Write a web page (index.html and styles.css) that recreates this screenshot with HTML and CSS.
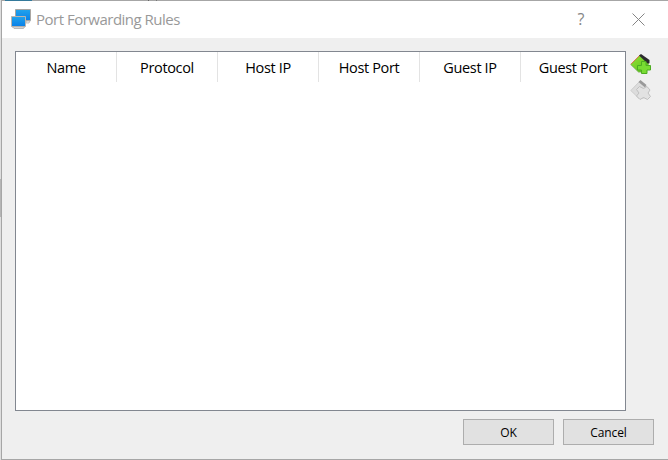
FILE: index.html
```html
<!DOCTYPE html>
<html lang="en">
<head>
<meta charset="utf-8">
<title>Port Forwarding Rules</title>
<link rel="stylesheet" href="styles.css">
</head>
<body>
<div class="desktop">
<main class="window">
  <header class="titlebar">
    <svg class="app-icon" width="21" height="22" viewBox="0 0 21 22">
      <defs><linearGradient id="screen" x1="0" y1="0" x2="0" y2="1"><stop offset="0" stop-color="#22a4eb"/><stop offset="1" stop-color="#087fe8"/></linearGradient></defs>
      <path d="M4.500 1.500h15v11h-15z" fill="url(#screen)" stroke="#aaa6a2"/>
      <path d="M15 13h4l-1 2h-3z" fill="#eee" stroke="#aaa" stroke-width=".7"/>
      <path d="M.5 8.500h14v10H.5z" fill="url(#screen)" stroke="#bbb5ae"/>
      <path d="M1.500 19h12l-1 1.500H3z" fill="#eee" stroke="#aaa" stroke-width=".8"/>
    </svg>
    <h1 class="title">Port Forwarding Rules</h1>
    <button class="control help" aria-label="Help">?</button>
    <button class="control close" aria-label="Close"><svg width="13" height="13" viewBox="0 0 13 13"><path d="M.5.5l12 12M12.500.5l-12 12" stroke="#858585" stroke-width="1" fill="none"/></svg></button>
  </header>
  <section class="content">
    <div class="rules">
      <div class="columns">
        <div class="column"><span>Name</span></div>
        <div class="column"><span>Protocol</span></div>
        <div class="column"><span>Host IP</span></div>
        <div class="column"><span>Host Port</span></div>
        <div class="column"><span>Guest IP</span></div>
        <div class="column"><span>Guest Port</span></div>
      </div>
    </div>
    <div class="tools">
      <svg width="22" height="22" viewBox="0 0 22 22">
        <defs><linearGradient id="green" x1="0" y1="0" x2="1" y2="1"><stop offset="0" stop-color="#96dc3c"/><stop offset="1" stop-color="#58c814"/></linearGradient></defs>
        <path d="M.8 11.500L10 2l9 8-5 9H8.500z" fill="url(#green)" stroke="#6aa545" stroke-width=".8"/>
        <path d="M1 11L10 2" stroke="#dd7a50" stroke-width="1"/>
        <path d="M9 2.500L11 1l8.500 6v3l-2 .5z" fill="#2b2a2e"/>
        <path d="M11.500 8.500H16v4h4.500V17H17v3.500h-5.500V17h-4v-4.500h4z" fill="#78dc32" stroke="#4dac22"/>
      </svg>
      <svg width="22" height="22" viewBox="0 0 22 22">
        <path d="M.8 11.500L10 2l8 7-4 10H8.500z" fill="#dcdcdc" stroke="#c6c6c6" stroke-width=".8"/>
        <path d="M8.500 3L10.500 1l6 5-1.500 2.500z" fill="#999"/>
        <path d="M9.500 7.500l4 2 3.500-2 3 3.500-2 3 2.500 3.500-3 3-4-2-3.500 2-3.500-3.500 2.500-3-2.500-3.500z" fill="#e2e2e2" stroke="#c0c0c0"/>
      </svg>
    </div>
  </section>
  <footer class="actions"><button>OK</button><button>Cancel</button></footer>
</main>
</div>
</body>
</html>
```
FILE: styles.css
```css
* { box-sizing: border-box; }
body { margin: 0; overflow: hidden; background: #ddd; font-family: "Open Sans", "Noto Sans", sans-serif; }
button { font: inherit; padding: 0; border: 0; background: transparent; }
svg { display: block; flex-shrink: 0; }
.desktop { width: 668px; height: 460px; padding-left: 1px; background: linear-gradient(#dedede 0 179px, #b5b5b5 179px 217px, #dedede 217px); }
.window { width: 667px; height: 460px; display: flex; flex-direction: column; border: 0 solid #a6a6a6; border-width: 0 0 1px 1px; padding-top: 1px; background: linear-gradient(90deg, #a6a6a6 0 3px, #34799a 3px 30px, #a6a6a6 30px 146px, #666 146px 147px, #a6a6a6 147px 154px, #777 154px 155px, #a6a6a6 155px) 0 0 / 100% 1px no-repeat #efefef; }
.titlebar { height: 37px; display: flex; align-items: center; background: #fff; color: #999; }
.app-icon { margin: -1px 0 0 9px; }
.title { width: 145px; margin: -1px 0 0 4px; font-size: 15px; line-height: 20px; font-weight: 400; letter-spacing: -.5px; white-space: nowrap; }
.control { display: flex; align-items: center; justify-content: center; height: 36px; }
.help { width: 20px; margin: -2px 0 0 390px; font-size: 16px; color: #858585; }
.close { width: 20px; margin-left: 37px; }
.content { height: 373px; display: flex; padding-top: 13px; padding-left: 13px; }
.rules { width: 611px; height: 360px; background: #fff; border: 1px solid #828790; }
.columns { height: 30px; display: grid; grid-template-columns: repeat(6, 101px); }
.column { display: flex; align-items: center; justify-content: center; padding-top: 2px; border-right: 1px solid #e3e3e3; color: #000; font-size: 14.500px; line-height: 20px; letter-spacing: -.35px; white-space: nowrap; }
.column:last-child { width: 104px; border-right: 0; }
.tools { padding: 2px 0 0 4px; display: flex; flex-direction: column; gap: 4px; }
.actions { height: 48px; padding: 8px 14px 0 0; display: flex; gap: 9px; justify-content: flex-end; }
.actions button { width: 91px; height: 26px; padding-top: 2px; border: 1px solid #adadad; background: #e1e1e1; color: #000; font-size: 12px; line-height: 22px; letter-spacing: -.1px; }
```
